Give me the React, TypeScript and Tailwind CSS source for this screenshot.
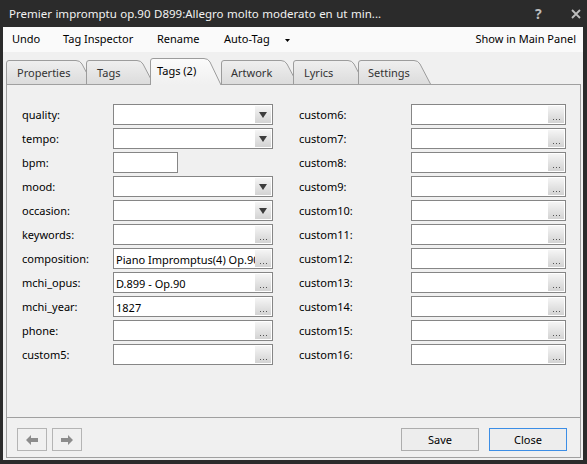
import React from "react";

type Row = { label: string; kind: "combo" | "short" | "ell"; value?: string };

const leftRows: Row[] = [
  { label: "quality:", kind: "combo" },
  { label: "tempo:", kind: "combo" },
  { label: "bpm:", kind: "short" },
  { label: "mood:", kind: "combo" },
  { label: "occasion:", kind: "combo" },
  { label: "keywords:", kind: "ell" },
  { label: "composition:", kind: "ell", value: "Piano Impromptus(4) Op.90" },
  { label: "mchi_opus:", kind: "ell", value: "D.899 - Op.90" },
  { label: "mchi_year:", kind: "ell", value: "1827" },
  { label: "phone:", kind: "ell" },
  { label: "custom5:", kind: "ell" },
];

const rightRows: Row[] = Array.from({ length: 11 }, (_, i) => ({
  label: `custom${i + 6}:`,
  kind: "ell" as const,
}));

const tabs = [
  { label: "Properties", w: 88, ml: 3, tx: 11 },
  { label: "Tags", w: 69, ml: -8, tx: 11 },
  { label: "Tags (2)", w: 72, ml: -5, tx: 7, active: true },
  { label: "Artwork", w: 78, ml: -1, tx: 10 },
  { label: "Lyrics", w: 73, ml: -6, tx: 11 },
  { label: "Settings", w: 74, ml: -8, tx: 10 },
];

function TabShape({ w, active, id }: { w: number; active?: boolean; id: string }) {
  const d = active
    ? `M0.5,27 L0.5,3 Q0.5,0.5 3,0.5 L${w - 18},0.5 Q${w - 14},0.5 ${w - 12},4 L${w - 1},27`
    : `M0.5,26 L0.5,5 Q0.5,2.5 3,2.5 L${w - 18},2.5 Q${w - 14},2.5 ${w - 12},6 L${w - 1.5},26`;
  return (
    <svg className="absolute left-0 top-0" width={w} height={27} viewBox={`0 0 ${w} 27`}>
      <defs>
        <linearGradient id={id} x1="0" y1="0" x2="0" y2="1">
          <stop offset="0" stopColor={active ? "#fbfbfb" : "#efefef"} />
          <stop offset="1" stopColor={active ? "#f0f0f0" : "#dcdcdc"} />
        </linearGradient>
      </defs>
      <path d={d} fill={`url(#${id})`} stroke="#9c9c9c" strokeWidth="1" />
    </svg>
  );
}

function FieldButton({ kind }: { kind: "combo" | "ell" }) {
  return (
    <div className="w-[16px] h-[17px] mt-[1px] mr-[1px] shrink-0 bg-linear-to-b from-[#f5f5f5] to-[#d3d3d3] flex items-center justify-center">
      {kind === "combo" ? (
        <svg width="8" height="6" viewBox="0 0 8 6">
          <polygon points="0,0 8,0 4,6" fill="#3c3c3c" />
        </svg>
      ) : (
        <div className="flex gap-[2px] mt-[9px]">
          <span className="w-[1px] h-[1px] bg-[#555]" />
          <span className="w-[1px] h-[1px] bg-[#555]" />
          <span className="w-[1px] h-[1px] bg-[#555]" />
        </div>
      )}
    </div>
  );
}

function Field({ row, labelW, boxW }: { row: Row; labelW: number; boxW: number }) {
  return (
    <div className="flex items-center h-[21px]">
      <div className="shrink-0 text-black pt-[2px]" style={{ width: labelW }}>
        {row.label}
      </div>
      <div
        className="h-[21px] border border-[#868686] bg-white flex"
        style={{ width: row.kind === "short" ? 65 : boxW }}
      >
        <div className="flex-1 min-w-0 overflow-hidden whitespace-nowrap pl-[2px] pt-[1px] leading-[19px] text-black">
          {row.value ?? ""}
        </div>
        {row.kind !== "short" && <FieldButton kind={row.kind} />}
      </div>
    </div>
  );
}

function Arrow({ dir }: { dir: "l" | "r" }) {
  return (
    <svg width="12" height="10" viewBox="0 0 12 10">
      <polygon
        points={dir === "l" ? "0,5 5,0 5,3 12,3 12,7 5,7 5,10" : "12,5 7,0 7,3 0,3 0,7 7,7 7,10"}
        fill="#8c8c8c"
      />
    </svg>
  );
}

export default function App() {
  return (
    <div className="w-[587px] h-[464px] bg-[#2b2b2b] flex flex-col overflow-hidden font-['Segoe_UI','Noto_Sans',sans-serif] text-[11px]">
      {/* title bar */}
      <div className="h-[27px] shrink-0 flex items-center pl-[9px] text-[#f2f2f2] text-[11.5px]">
        <div className="flex-1 whitespace-nowrap [word-spacing:0.5px]">
          Premier impromptu op.90 D899:Allegro molto moderato en ut min...
        </div>
        <div className="w-[22px] text-[#bdbdbd] font-bold text-[14px] leading-none">?</div>
        <div className="w-[24px] mr-[6px] flex justify-end">
          <svg width="10" height="10" viewBox="0 0 10 10">
            <path d="M1,1 L9,9 M9,1 L1,9" stroke="#bdbdbd" strokeWidth="1.8" />
          </svg>
        </div>
      </div>
      <div className="flex-1 flex flex-col ml-[3px] mr-[4px] mb-[4px] min-h-0">
        {/* menu bar */}
        <div className="h-[25px] shrink-0 bg-[#fafafa] flex items-center text-black">
          <div className="pl-[9px] w-[60px]">Undo</div>
          <div className="w-[94px]">Tag Inspector</div>
          <div className="w-[67px]">Rename</div>
          <div className="w-[61px]">Auto-Tag</div>
          <svg width="5" height="3" viewBox="0 0 5 3" className="mt-[1px]">
            <polygon points="0,0 5,0 2.5,3" fill="#000" />
          </svg>
          <div className="ml-auto pr-[7px]">Show in Main Panel</div>
        </div>
        {/* body */}
        <div className="flex-1 bg-[#f0f0f0] flex flex-col pt-[6px] pb-[2px] min-h-0">
          <div className="relative z-10 h-[27px] -mb-px flex shrink-0">
            {tabs.map((t, i) => (
              <div
                key={t.label}
                className={`relative shrink-0 h-[27px] ${t.active ? "z-10" : ""}`}
                style={{ width: t.w, marginLeft: t.ml }}
              >
                <TabShape w={t.w} active={t.active} id={`tabg${i}`} />
                <div
                  className={`relative flex items-center h-[27px] whitespace-nowrap ${
                    t.active ? "pt-[0px] text-black" : "pt-[3px] text-[#333]"
                  }`}
                  style={{ paddingLeft: t.tx }}
                >
                  {t.label}
                </div>
              </div>
            ))}
          </div>
          <div className="flex-1 ml-[3px] mr-[2px] border border-[#a0a0a0] flex flex-col min-h-0">
            <div className="h-[333px] shrink-0 border-b border-[#a0a0a0] pl-[15px] pt-[19px] flex">
              <div className="flex flex-col gap-[3px]">
                {leftRows.map((r) => (
                  <Field key={r.label} row={r} labelW={91} boxW={160} />
                ))}
              </div>
              <div className="flex flex-col gap-[3px] ml-[26px]">
                {rightRows.map((r) => (
                  <Field key={r.label} row={r} labelW={112} boxW={155} />
                ))}
              </div>
            </div>
            <div className="flex-1 flex items-start pt-[10px] pl-[10px] pr-[13px]">
              <div className="w-[30px] h-[23px] border border-[#b4b4b4] flex items-center justify-center">
                <Arrow dir="l" />
              </div>
              <div className="w-[30px] h-[23px] ml-[5px] border border-[#b4b4b4] flex items-center justify-center">
                <Arrow dir="r" />
              </div>
              <div className="ml-auto w-[78px] h-[23px] pt-[1px] border border-[#adadad] bg-[#ededed] flex items-center justify-center text-black">
                Save
              </div>
              <div className="ml-[10px] w-[78px] h-[23px] pt-[1px] border border-[#3c8ee6] bg-[#ededed] flex items-center justify-center text-black">
                Close
              </div>
            </div>
          </div>
        </div>
      </div>
    </div>
  );
}
